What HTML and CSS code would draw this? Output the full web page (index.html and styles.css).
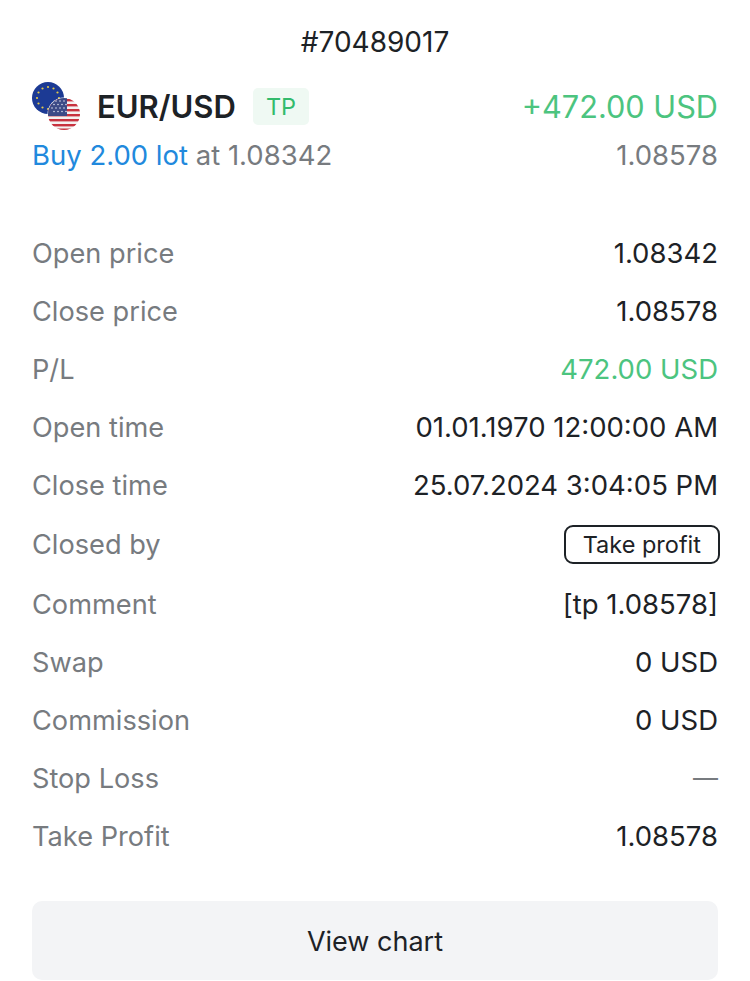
FILE: index.html
```html
<!DOCTYPE html>
<html lang="en">
<head>
    <meta charset="UTF-8">
    <meta name="viewport" content="width=device-width, initial-scale=1.0">
    <title>Deal #70489017</title>
    <link rel="stylesheet" href="styles.css">
</head>
<body>
    <div class="deal">
        <h1 class="deal-id">#70489017</h1>
        <div class="summary">
            <div class="summary-row">
                <div class="symbol">
                    <svg class="flags" width="50" height="50" viewBox="0 0 50 50">
                        <defs>
                            <clipPath id="usClip"><circle cx="33" cy="33" r="16"/></clipPath>
                        </defs>
                        <circle cx="17" cy="17" r="16" fill="#1c3a94"/>
                        <g fill="#e3c94a">
                            <circle cx="17" cy="6" r="1.1"/>
                            <circle cx="22.5" cy="7.5" r="1.1"/>
                            <circle cx="26.5" cy="11.5" r="1.1"/>
                            <circle cx="28" cy="17" r="1.1"/>
                            <circle cx="11.5" cy="7.5" r="1.1"/>
                            <circle cx="7.5" cy="11.5" r="1.1"/>
                            <circle cx="6" cy="17" r="1.1"/>
                            <circle cx="7.5" cy="22.5" r="1.1"/>
                            <circle cx="11.5" cy="26.5" r="1.1"/>
                            <circle cx="17" cy="28" r="1.1"/>
                        </g>
                        <circle cx="33" cy="33" r="16.5" fill="#fff"/>
                        <g clip-path="url(#usClip)">
                            <rect x="17" y="17" width="32" height="32" fill="#f4f1f1"/>
                            <g fill="#c8323f">
                                <rect x="17" y="18" width="32" height="2.4"/>
                                <rect x="17" y="23" width="32" height="2.4"/>
                                <rect x="17" y="28" width="32" height="2.4"/>
                                <rect x="17" y="33" width="32" height="2.4"/>
                                <rect x="17" y="38" width="32" height="2.4"/>
                                <rect x="17" y="43" width="32" height="2.4"/>
                                <rect x="17" y="47.5" width="32" height="2.4"/>
                            </g>
                            <rect x="17" y="17" width="19" height="18" fill="#3d4a86"/>
                            <g fill="#d8dcec">
                                <circle cx="21" cy="20" r="0.8"/><circle cx="25" cy="20" r="0.8"/><circle cx="29" cy="20" r="0.8"/><circle cx="33" cy="20" r="0.8"/>
                                <circle cx="23" cy="23.5" r="0.8"/><circle cx="27" cy="23.5" r="0.8"/><circle cx="31" cy="23.5" r="0.8"/><circle cx="35" cy="23.5" r="0.8"/>
                                <circle cx="21" cy="27" r="0.8"/><circle cx="25" cy="27" r="0.8"/><circle cx="29" cy="27" r="0.8"/><circle cx="33" cy="27" r="0.8"/>
                                <circle cx="23" cy="30.5" r="0.8"/><circle cx="27" cy="30.5" r="0.8"/><circle cx="31" cy="30.5" r="0.8"/><circle cx="35" cy="30.5" r="0.8"/>
                            </g>
                        </g>
                    </svg>
                    <span class="pair">EUR/USD</span>
                    <span class="tag">TP</span>
                </div>
                <span class="profit-big">+472.00 USD</span>
            </div>
            <div class="summary-row sub">
                <span><span class="buy">Buy 2.00 lot</span> at 1.08342</span>
                <span>1.08578</span>
            </div>
        </div>

        <div class="details">
            <div class="row"><span class="label">Open price</span><span>1.08342</span></div>
            <div class="row"><span class="label">Close price</span><span>1.08578</span></div>
            <div class="row"><span class="label">P/L</span><span class="green">472.00 USD</span></div>
            <div class="row"><span class="label">Open time</span><span>01.01.1970 12:00:00 AM</span></div>
            <div class="row"><span class="label">Close time</span><span>25.07.2024 3:04:05 PM</span></div>
            <div class="row row-tall"><span class="label">Closed by</span><span class="pill">Take profit</span></div>
            <div class="row"><span class="label">Comment</span><span>[tp 1.08578]</span></div>
            <div class="row"><span class="label">Swap</span><span>0 USD</span></div>
            <div class="row"><span class="label">Commission</span><span>0 USD</span></div>
            <div class="row"><span class="label">Stop Loss</span><span class="dash">—</span></div>
            <div class="row"><span class="label">Take Profit</span><span>1.08578</span></div>
        </div>

        <button class="chart-btn" type="button">View chart</button>
    </div>
</body>
</html>
```

FILE: styles.css
```css
body {
    font-family: 'Inter', 'Liberation Sans', sans-serif;
    margin: 0;
    padding: 0;
    background-color: #ffffff;
    color: #1d2226;
    font-size: 27.5px;
}
.deal {
    height: 981px;
    padding: 23px 32px 0 32px;
    box-sizing: border-box;
    overflow: hidden;
}
.deal-id {
    margin: 0;
    font-size: 28px;
    font-weight: 400;
    line-height: 38px;
    text-align: center;
}
.summary {
    margin-top: 20px;
}
.summary-row {
    display: flex;
    justify-content: space-between;
    align-items: center;
    height: 50px;
}
.symbol {
    display: flex;
    align-items: center;
}
.flags {
    margin-left: -1px;
    margin-right: 16px;
}
.pair {
    font-size: 31px;
    font-weight: 600;
}
.tag {
    margin-left: 17px;
    padding: 0 13px;
    height: 37px;
    line-height: 37px;
    background-color: #eff9f3;
    color: #33bb6c;
    font-size: 23.5px;
    border-radius: 5px;
}
.profit-big {
    color: #4cc47f;
    font-size: 30.7px;
}
.sub {
    height: 36px;
    margin-top: 6px;
    color: #777b7f;
}
.buy {
    color: #2189dd;
}
.details {
    margin-top: 51px;
}
.row {
    display: flex;
    justify-content: space-between;
    align-items: center;
    height: 58px;
}
.row-tall {
    height: 61px;
}
.label {
    color: #777b7f;
    font-size: 27.2px;
}
.green {
    color: #4cc47f;
}
.dash {
    color: #777b7f;
    font-size: 25px;
}
.pill {
    margin-right: -2px;
    padding: 0 17px;
    height: 35px;
    line-height: 35px;
    border: 2px solid #1d2226;
    border-radius: 9px;
    font-size: 23.5px;
}
.chart-btn {
    display: block;
    width: 686px;
    height: 79px;
    margin: 36px 0 0 0;
    padding-top: 2px;
    background-color: #f3f4f6;
    color: #1d2226;
    font-family: inherit;
    font-size: 27px;
    border: none;
    border-radius: 10px;
}
```
